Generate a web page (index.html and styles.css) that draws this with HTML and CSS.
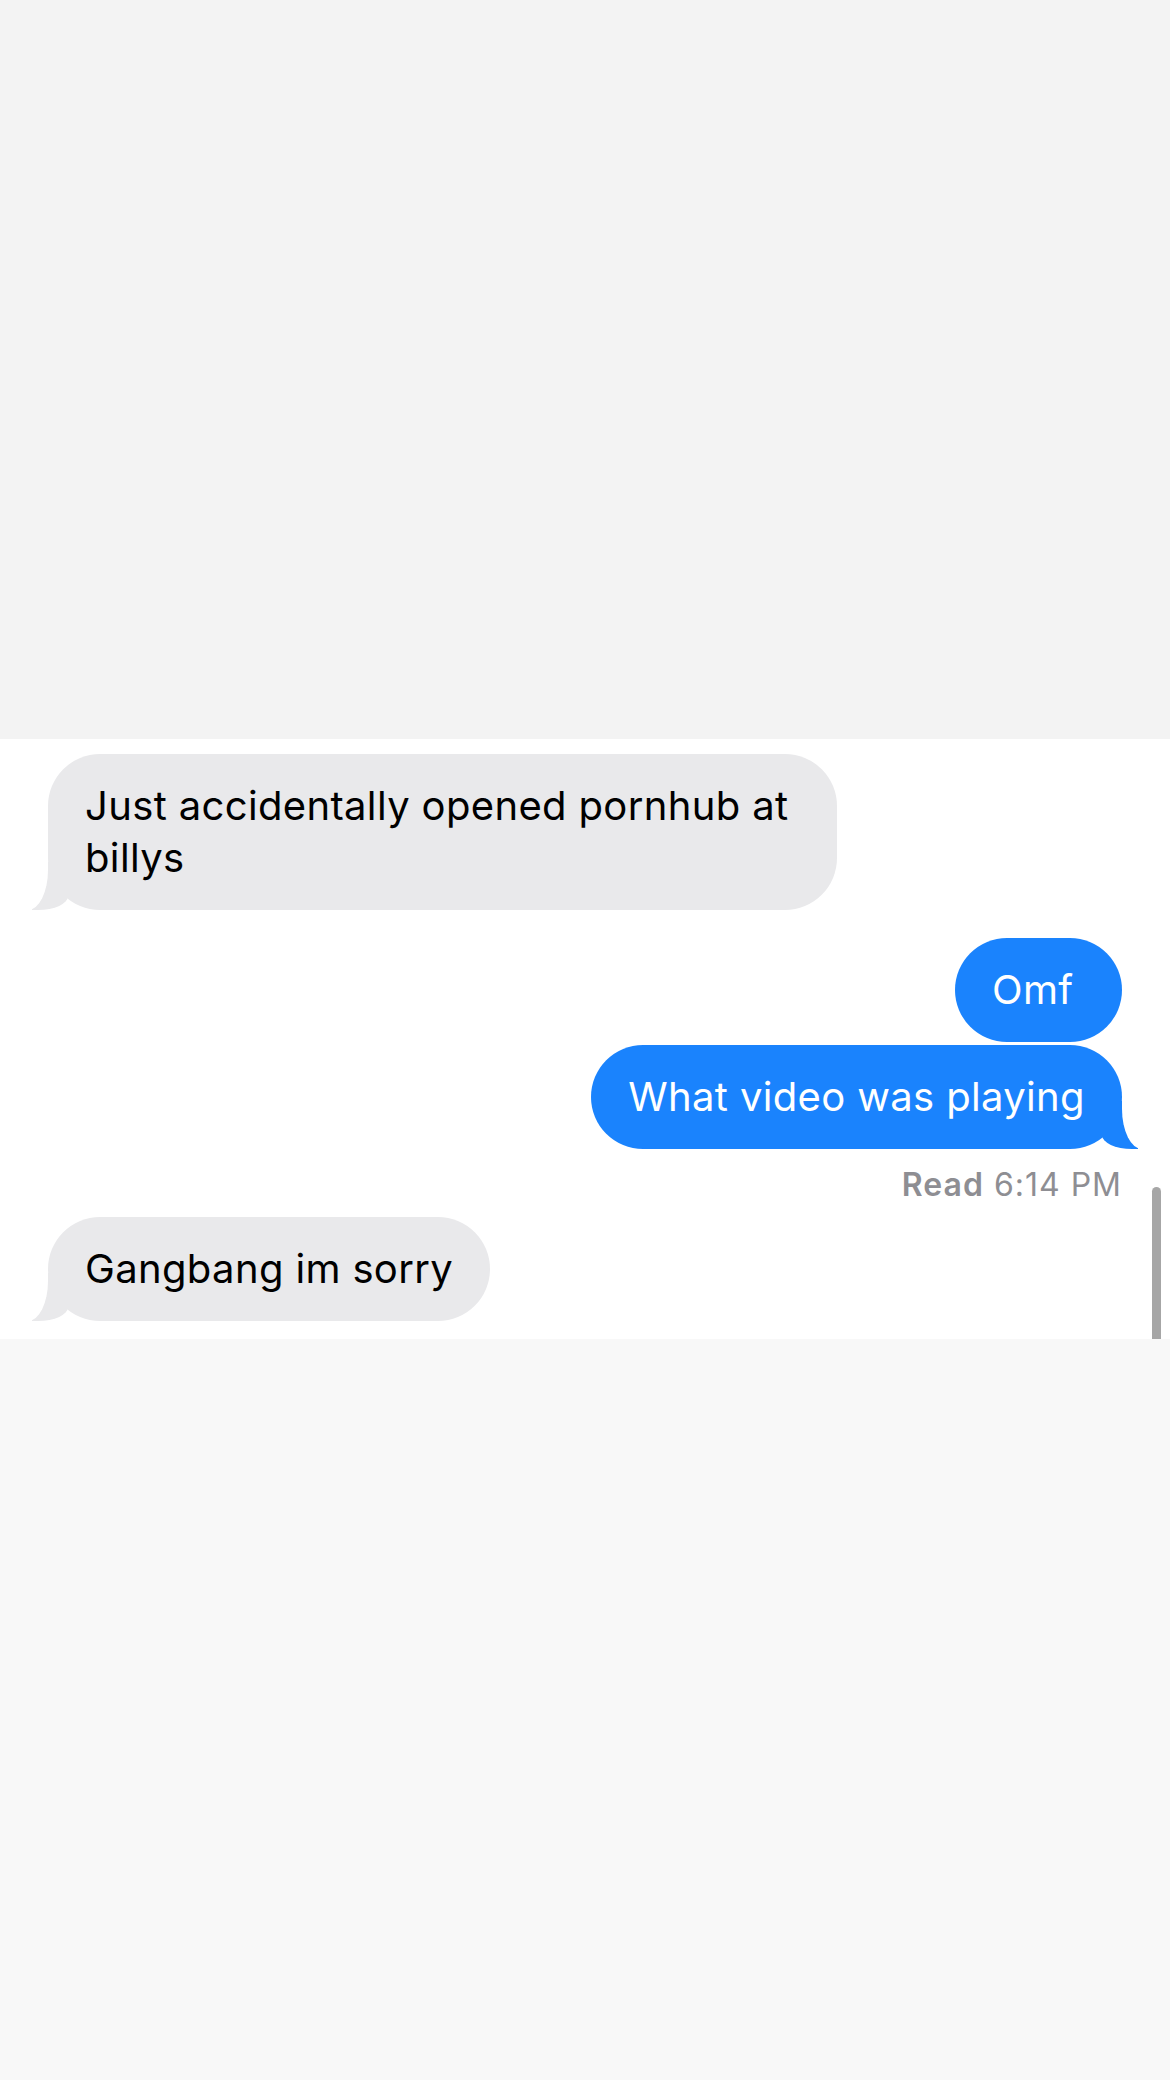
FILE: index.html
```html
<!DOCTYPE html>
<html>
<head>
<meta charset="utf-8">
<link rel="stylesheet" href="styles.css">
</head>
<body>
<div class="top-area"></div>
<main class="thread">
  <div class="row row-left">
    <div class="bubble received bubble-wide tail">Just accidentally opened pornhub at billys</div>
  </div>
  <div class="row row-right gap-big">
    <div class="bubble sent">Omf</div>
  </div>
  <div class="row row-right gap-small">
    <div class="bubble sent tail">What video was playing</div>
  </div>
  <div class="status"><span class="status-label">Read</span> 6:14 PM</div>
  <div class="row row-left gap-status">
    <div class="bubble received tail">Gangbang im sorry</div>
  </div>
  <div class="scroll-indicator"></div>
</main>
<div class="bottom-area"></div>
</body>
</html>
```
FILE: styles.css
```css
html, body {
  margin: 0;
  padding: 0;
}
body {
  width: 1170px;
  height: 2080px;
  display: flex;
  flex-direction: column;
  background: #f8f8f8;
  font-family: Inter, "Noto Sans", "Liberation Sans", sans-serif;
  overflow: hidden;
}
.top-area {
  height: 739px;
  background: #f3f3f3;
  flex: none;
}
.thread {
  position: relative;
  background: #ffffff;
  padding: 15px 48px 18px 48px;
  display: flex;
  flex-direction: column;
  flex: none;
}
.bottom-area {
  flex: 1;
  background: #f8f8f8;
}
.row {
  display: flex;
}
.row-left { justify-content: flex-start; }
.row-right { justify-content: flex-end; }
.gap-big { margin-top: 28px; }
.gap-small { margin-top: 3px; }
.gap-status { margin-top: 14px; }

.bubble {
  position: relative;
  box-sizing: border-box;
  min-width: 167px;
  font-size: 40px;
  line-height: 52px;
  padding: 26px 37px;
  border-radius: 52px;
  letter-spacing: 0.35px;
}
.bubble-wide {
  width: 789px;
}
.received {
  background: #e9e9eb;
  color: #000;
}
.sent {
  background: #1a83fd;
  color: #fff;
}
.tail::before,
.tail::after {
  content: "";
  position: absolute;
  bottom: 0;
}
.received.tail::before {
  left: -16px;
  width: 36px;
  height: 48px;
  background: #e9e9eb;
  border-bottom-right-radius: 30px 14px;
}
.received.tail::after {
  left: -60px;
  width: 60px;
  height: 48px;
  background: #ffffff;
  border-bottom-right-radius: 20px 40px;
}
.sent.tail::before {
  right: -16px;
  width: 36px;
  height: 48px;
  background: #1a83fd;
  border-bottom-left-radius: 30px 14px;
}
.sent.tail::after {
  right: -60px;
  width: 60px;
  height: 48px;
  background: #ffffff;
  border-bottom-left-radius: 20px 40px;
}
.status {
  margin-top: 18px;
  text-align: right;
  font-size: 32px;
  line-height: 36px;
  letter-spacing: 1px;
  color: #8e8e93;
}
.status-label {
  font-weight: 600;
}
.scroll-indicator {
  position: absolute;
  right: 9px;
  bottom: 0;
  width: 9px;
  height: 152px;
  border-radius: 4.5px 4.5px 0 0;
  background: #a6a6a6;
}
```
